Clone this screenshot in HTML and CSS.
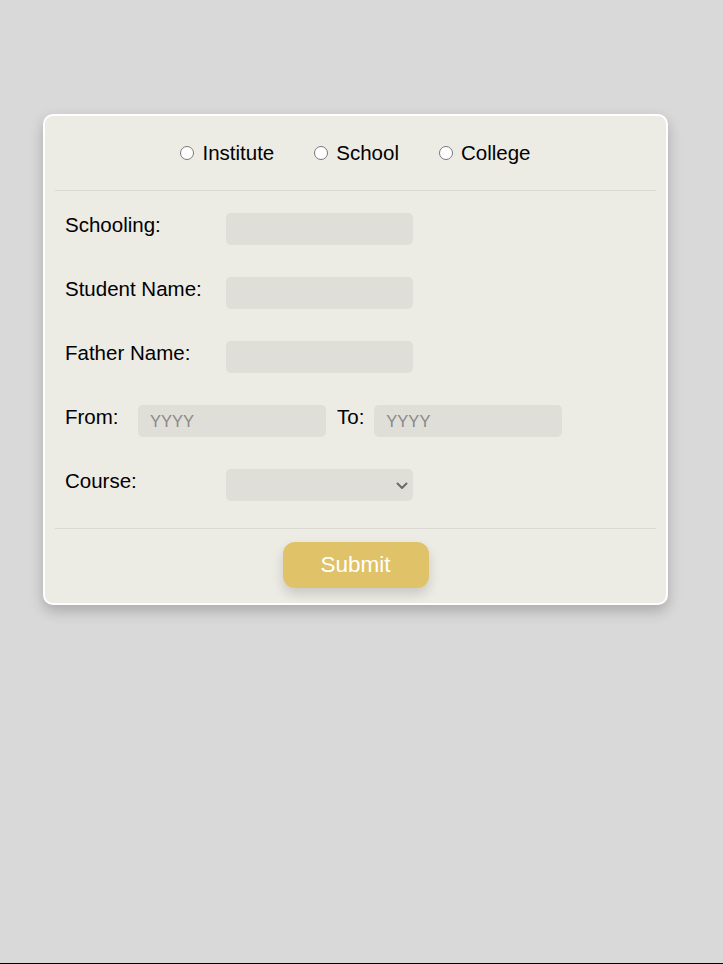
FILE: index.html
```html
<!DOCTYPE html>
<html>
<head>
<meta charset="utf-8">
<link rel="stylesheet" href="styles.css">
</head>
<body>
<div class="page">
  <form class="card">
    <div class="radios">
      <label class="radio"><input type="radio" name="kind"><span>Institute</span></label>
      <label class="radio"><input type="radio" name="kind"><span>School</span></label>
      <label class="radio"><input type="radio" name="kind"><span>College</span></label>
    </div>
    <div class="fields">
      <div class="row">
        <label class="lbl">Schooling:</label>
        <input class="inp" type="text">
      </div>
      <div class="row">
        <label class="lbl">Student Name:</label>
        <input class="inp" type="text">
      </div>
      <div class="row">
        <label class="lbl">Father Name:</label>
        <input class="inp" type="text">
      </div>
      <div class="row">
        <label class="lbl-from">From:</label>
        <input class="inp year" type="text" placeholder="YYYY">
        <label class="lbl-to">To:</label>
        <input class="inp year" type="text" placeholder="YYYY">
      </div>
      <div class="row">
        <label class="lbl">Course:</label>
        <span class="sel-wrap">
          <select class="inp sel"><option></option></select>
          <svg class="chev" width="12" height="8" viewBox="0 0 12 8"><path d="M1.5 1.5 L6 6 L10.5 1.5" fill="none" stroke="#6b6b6b" stroke-width="2" stroke-linecap="round" stroke-linejoin="round"/></svg>
        </span>
      </div>
    </div>
    <div class="actions">
      <button type="button" class="submit">Submit</button>
    </div>
  </form>
</div>
</body>
</html>
```

FILE: styles.css
```css
html, body {
  margin: 0;
  padding: 0;
}
body {
  background: #d9d9d9;
  font-family: "Liberation Sans", Arial, sans-serif;
  color: #000;
  height: 963px;
  border-bottom: 1px solid #000;
}
.page {
  padding: 114px 0 0 43px;
}
.card {
  box-sizing: border-box;
  width: 625px;
  height: 491px;
  background: #ecebe4;
  border: 2px solid #fff;
  border-radius: 10px;
  box-shadow: 0 6px 14px rgba(0, 0, 0, 0.22);
  padding: 0 10px;
  display: flex;
  flex-direction: column;
}
.radios {
  height: 74px;
  border-bottom: 1px solid #d9d8d3;
  display: flex;
  justify-content: center;
  align-items: center;
  gap: 40px;
  font-size: 20.5px;
}
.radio {
  display: flex;
  align-items: center;
}
.radio input {
  width: 14px;
  height: 14px;
  margin: 0 8px 0 0;
}
.fields {
  padding: 22px 10px 27px;
  display: flex;
  flex-direction: column;
  gap: 32px;
  border-bottom: 1px solid #d9d8d3;
}
.row {
  display: flex;
  align-items: flex-start;
  height: 32px;
}
.lbl, .lbl-from, .lbl-to {
  font-size: 20.5px;
  line-height: 24px;
}
.lbl {
  width: 161px;
  flex: none;
}
.lbl-from {
  width: 73px;
  flex: none;
}
.lbl-to {
  margin: 0 10px 0 11px;
}
.inp {
  box-sizing: border-box;
  width: 187px;
  height: 32px;
  border: none;
  border-radius: 5px;
  background: #e0ded8;
  padding: 0 12px;
  font-family: "Liberation Sans", Arial, sans-serif;
  font-size: 16.5px;
  outline: none;
  margin: 0;
}
.year {
  width: 188px;
}
.inp::placeholder {
  color: #8a8a88;
}
.sel-wrap {
  position: relative;
  display: block;
  width: 187px;
  height: 32px;
}
.sel {
  appearance: none;
  -webkit-appearance: none;
  display: block;
  padding: 0 6px;
  color: #555;
}
.chev {
  position: absolute;
  right: 5px;
  top: 13px;
  pointer-events: none;
}
.actions {
  display: flex;
  justify-content: center;
  padding-top: 13px;
}
.submit {
  width: 146px;
  height: 46px;
  border: none;
  border-radius: 12px;
  background: #e0c268;
  color: #fff;
  font-family: "Liberation Sans", Arial, sans-serif;
  font-size: 22.5px;
  box-shadow: 0 6px 12px rgba(0, 0, 0, 0.15);
}
```
